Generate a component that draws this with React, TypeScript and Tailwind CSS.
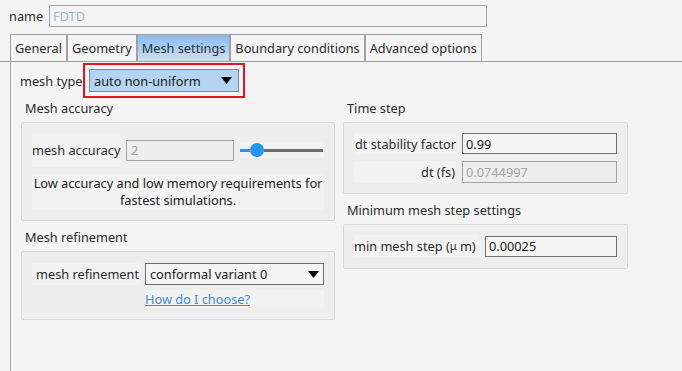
const tabs = ['General', 'Geometry', 'Mesh settings', 'Boundary conditions', 'Advanced options'];

function Arrow() {
  return (
    <svg width="11" height="7" viewBox="0 0 11 7" className="flex-none">
      <path d="M0 0 H11 L5.5 7 Z" fill="#000" />
    </svg>
  );
}

function Heading({ children, top }: { children: React.ReactNode; top: string }) {
  return <div className={`${top} h-[18px] mb-[5px] pl-[4px] text-[#2b2b2b]`}>{children}</div>;
}

function Box({ children, className = '' }: { children: React.ReactNode; className?: string }) {
  return (
    <div className={`border border-[#d9d9d9] rounded-[2px] bg-[#eeeeee] ${className}`}>{children}</div>
  );
}

export default function App() {
  return (
    <div className="w-[682px] h-[371px] overflow-hidden bg-[#f4f4f4] text-[12.75px] leading-[18px] whitespace-nowrap text-[#2b2b2b] font-['Noto_Sans',sans-serif] flex flex-col">
      {/* name */}
      <div className="mt-[5px] h-[22px] flex items-center">
        <div className="w-[49px] pl-[9px]">name</div>
        <div className="w-[438px] h-[22px] border border-[#a3a3a3] pl-[3px] flex items-center text-[#9cb8d2]">FDTD</div>
      </div>

      {/* tabs */}
      <div className="mt-[7px] flex border-b border-[#a0a0a0] pl-[10px]">
        {tabs.map((t) => (
          <div
            key={t}
            className={
              t === 'Mesh settings'
                ? 'h-[27px] px-[4px] flex items-center border border-b-0 border-[#a0a0a0] bg-gradient-to-b from-[#84bcf5] to-[#d4dfe8] text-[#25313d]'
                : 'h-[27px] px-[4px] flex items-center border border-b-0 border-[#a0a0a0] text-[#2b2b2b]'
            }
          >
            {t}
          </div>
        ))}
      </div>

      {/* content */}
      <div className="flex-1 ml-[10px] border-l border-[#a0a0a0] pl-[9px] pt-[1px]">
        <div className="flex items-center">
          <div className="w-[63px]">mesh type</div>
          <div className="border-2 border-[#e8111d] px-[4px] py-[4px]">
            <div className="w-[150px] h-[23px] bg-[#b4d5f1] border border-[#7d8a96] flex items-center justify-between pl-[4px] pr-[6px] text-[#1a1a1a]">
              <span>auto non-uniform</span>
              <Arrow />
            </div>
          </div>
        </div>

        <div className="flex gap-[8px] pl-[1px]">
          {/* left column */}
          <div className="w-[314px]">
            <Heading top="mt-[1px]">Mesh accuracy</Heading>
            <Box className="px-[10px] pt-[10px] pb-[10px]">
              <div className="h-[34px] flex items-center">
                <div className="w-[88px] h-full bg-[#f2f2f2] flex items-center">mesh accuracy</div>
                <div className="ml-[6px] w-[108px] h-[21px] border border-[#a3a3a3] pl-[4px] flex items-center text-[#a3a3a3]">2</div>
                <div className="ml-[6px] w-[84px] h-[16px] bg-[#f2f2f2] flex items-center">
                  <div className="w-[10px] h-[3px] bg-[#2196f3]" />
                  <div className="w-[14px] h-[14px] rounded-full bg-[#2196f3]" />
                  <div className="flex-1 h-[3px] bg-[#6e6e6e] mr-[1px]" />
                </div>
              </div>
              <div className="mt-[7px] bg-[#f2f2f2] text-center leading-[17px] py-[1px] text-[#222]">
                Low accuracy and low memory requirements for
                <br />
                fastest simulations.
              </div>
            </Box>

            <Heading top="mt-[7px]">Mesh refinement</Heading>
            <Box className="px-[10px] pt-[11px] pb-[11px]">
              <div className="h-[22px] flex items-center">
                <div className="w-[108px] h-full bg-[#f2f2f2] flex items-center justify-end pr-[1px]">mesh refinement</div>
                <div className="ml-[5px] w-[179px] h-[22px] border border-[#6e6e6e] bg-[#f4f4f4] flex items-center justify-between pl-[4px] pr-[4px] text-[#1a1a1a]">
                  <span>conformal variant 0</span>
                  <Arrow />
                </div>
              </div>
              <div className="mt-[5px] ml-[113px] h-[18px] bg-[#f2f2f2] text-[#3a8fd6] underline">How do I choose?</div>
            </Box>
          </div>

          {/* right column */}
          <div className="w-[285px]">
            <Heading top="mt-[1px]">Time step</Heading>
            <Box className="px-[10px] pt-[10px] pb-[10px]">
              <div className="h-[21px] flex items-center">
                <div className="w-[102px] h-full bg-[#f2f2f2] flex items-center justify-end">dt stability factor</div>
                <div className="ml-[6px] w-[155px] h-[21px] border border-[#707070] pl-[3px] flex items-center text-[#1a1a1a] bg-[#f4f4f4]">0.99</div>
              </div>
              <div className="mt-[7px] h-[22px] flex items-center">
                <div className="w-[102px] h-full bg-[#f2f2f2] flex items-center justify-end pr-[1px]">dt (fs)</div>
                <div className="ml-[6px] w-[155px] h-[22px] border border-[#a3a3a3] pl-[3px] flex items-center text-[#a3a3a3]">0.0744997</div>
              </div>
            </Box>

            <Heading top="mt-[7px]">Minimum mesh step settings</Heading>
            <Box className="px-[10px] pt-[10px] pb-[11px]">
              <div className="h-[22px] flex items-center">
                <div className="w-[125px] h-full bg-[#f2f2f2] flex items-center">min mesh step (<span className="text-[11px]">μ</span>&nbsp;m)</div>
                <div className="ml-[6px] w-[132px] h-[21px] border border-[#707070] pl-[3px] flex items-center text-[#1a1a1a] bg-[#f4f4f4]">0.00025</div>
              </div>
            </Box>
          </div>
        </div>
      </div>
    </div>
  );
}
